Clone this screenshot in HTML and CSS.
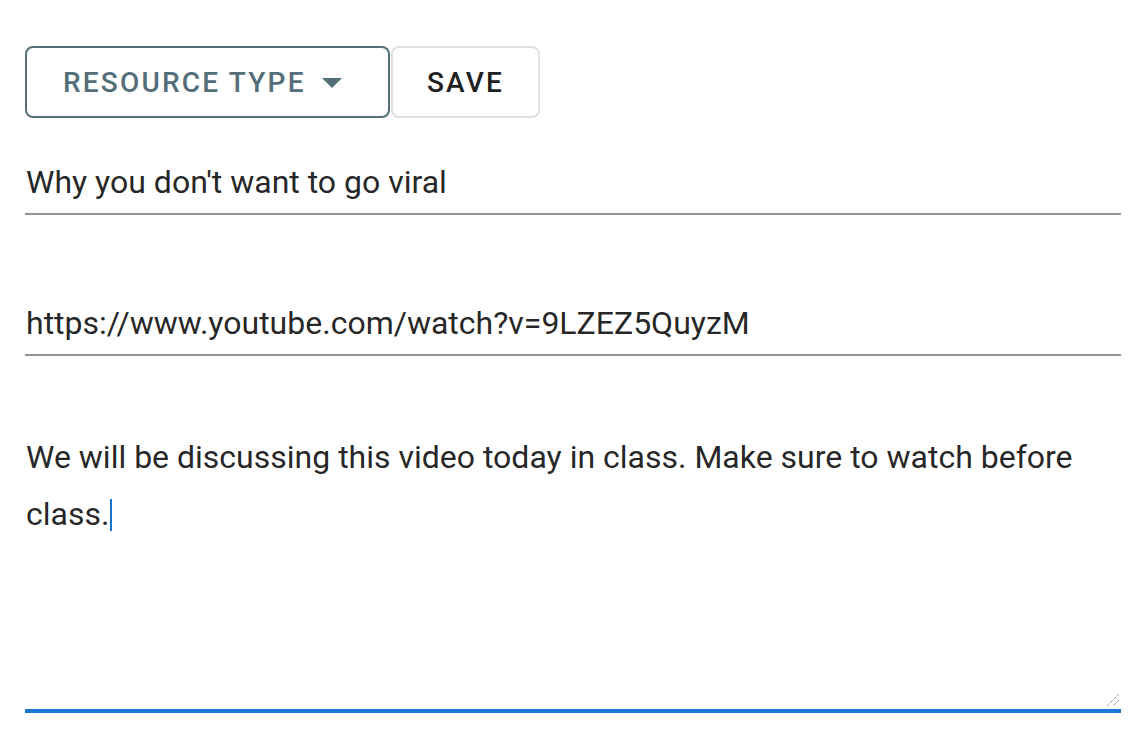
FILE: index.html
```html
<!DOCTYPE html>
<html>
<head>
<meta charset="utf-8">
<link rel="stylesheet" href="styles.css">
</head>
<body>
<div class="page">
  <div class="actions">
    <button class="btn btn-outlined">RESOURCE TYPE <svg class="arrow" width="20" height="10" viewBox="0 0 20 10"><path d="M0 0 L20 0 L10 10 Z" fill="#546e7a"/></svg></button>
    <button class="btn btn-save">SAVE</button>
  </div>
  <div class="field field-title"><div class="value">Why you don't want to go viral</div></div>
  <div class="field field-url"><div class="value">https://www.youtube.com/watch?v=9LZEZ5QuyzM</div></div>
  <div class="field field-area focused">
    <div class="area">We will be discussing this video today in class. Make sure to watch before class.<span class="caret"></span></div>
    <svg class="grip" width="14" height="14" viewBox="0 0 14 14"><path d="M13 1 L1 13 M13 7 L7 13" stroke="#666" stroke-width="1" stroke-dasharray="1 1" fill="none"/></svg>
  </div>
</div>
</body>
</html>
```
FILE: styles.css
```css
html, body {
  margin: 0;
  padding: 0;
  background: #fff;
}
.page {
  padding: 46px 21px 0 25px;
  font-family: Roboto, "Liberation Sans", sans-serif;
  color: rgba(0, 0, 0, 0.87);
}
.actions {
  display: flex;
  gap: 1px;
}
.btn {
  font-family: Roboto, "Liberation Sans", sans-serif;
  font-weight: 500;
  font-size: 28px;
  letter-spacing: 2.2px;
  height: 72px;
  background: #fff;
  border-radius: 8px;
  display: flex;
  align-items: center;
  cursor: pointer;
}
.btn-outlined {
  width: 365px;
  border: 2px solid #546e7a;
  color: #546e7a;
  padding: 0 0 0 36px;
}
.arrow {
  margin-left: 16px;
  margin-top: 2px;
}
.btn-save {
  width: 149px;
  border: 2px solid #e0e0e0;
  color: #212121;
  justify-content: center;
  padding: 0;
}
.field {
  position: relative;
  border-bottom: 2px solid #949494;
}
.value {
  font-size: 32px;
  line-height: 38px;
  white-space: nowrap;
}
.field-title {
  padding: 45px 0 12px 1px;
}
.field-url {
  padding: 89px 0 12px 1px;
}
.field-area {
  padding: 73px 0 0 1px;
  height: 280px;
  border-bottom: 4px solid #1976d2;
}
.area {
  font-size: 32px;
  line-height: 57px;
  padding-right: 40px;
}
.caret {
  display: inline-block;
  width: 2px;
  height: 32px;
  background: #1976d2;
  vertical-align: -6px;
  margin-left: 1px;
}
.grip {
  position: absolute;
  right: 1px;
  bottom: 2px;
}
```
